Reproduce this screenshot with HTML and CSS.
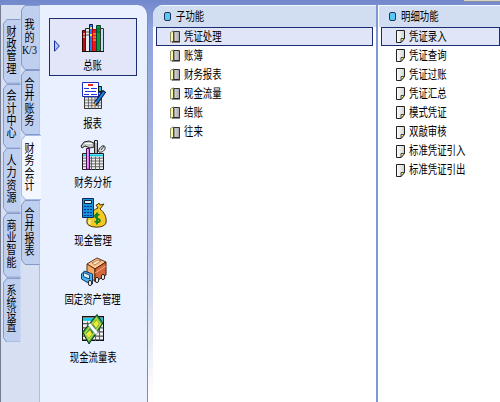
FILE: index.html
```html
<!DOCTYPE html>
<html lang="zh-CN">
<head>
<meta charset="utf-8">
<title>财务会计</title>
<link rel="stylesheet" href="styles.css">
</head>
<body>
<svg class="defs" width="0" height="0" aria-hidden="true">
  <defs>
    <linearGradient id="page" x1="0" x2="1"><stop offset="0" stop-color="#f4f4f4"/><stop offset="1" stop-color="#a2a2a6"/></linearGradient>
    <linearGradient id="sheet" x1="0" x2="1"><stop offset="0" stop-color="#fff"/><stop offset="1" stop-color="#d2d2cc"/></linearGradient>
    <symbol id="book" viewBox="0 0 11 13">
      <path d="M2 1.500h7.500v10H3.500" fill="url(#page)" stroke="#333"/>
      <path d="M.5 2.500L3.500.8v11H.5z" fill="#fbf8a8" stroke="#77744a" stroke-width=".8"/>
      <path d="M3.900 2v9.500M2 12h8" stroke="#222" fill="none"/>
    </symbol>
    <symbol id="note" viewBox="0 0 10 13">
      <path d="M.5.500h8v8L5 12.500H.5z" fill="url(#sheet)" stroke="#222"/>
      <path d="M8.500 8.500H5v4z" fill="#fff27a" stroke="#222" stroke-width=".8"/>
    </symbol>
    <symbol id="grid" viewBox="0 0 22 18" preserveAspectRatio="none">
      <path d="M.5.500h21v17H.5z" fill="#eee" stroke="#111"/>
      <path d="M1 2.500h20" stroke="#10c8e8" stroke-width="2"/>
      <path d="M1 5.500h20M1 8.500h20M1 11.500h20M1 14.500h20M5.500 4v14M9.500 4v14M13.500 4v14M17.500 4v14" stroke="#555" stroke-width=".9"/>
    </symbol>
  </defs>
</svg>
<div class="app">
  <aside class="tabs">
    <nav class="strip outer">
      <div class="tab"><svg viewBox="0 0 19 65" preserveAspectRatio="none"><path d="M18.500.5H4L.5 5v55L4 64.500h14.500"/></svg><span>财政管理</span></div>
      <div class="tab"><svg viewBox="0 0 19 65" preserveAspectRatio="none"><path d="M18.500.5H4L.5 5v55L4 64.500h14.500"/></svg><span>会计中心</span></div>
      <div class="tab"><svg viewBox="0 0 19 65" preserveAspectRatio="none"><path d="M18.500.5H4L.5 5v55L4 64.500h14.500"/></svg><span>人力资源</span></div>
      <div class="tab"><svg viewBox="0 0 19 65" preserveAspectRatio="none"><path d="M18.500.5H4L.5 5v55L4 64.500h14.500"/></svg><span>商业智能</span></div>
      <div class="tab"><svg viewBox="0 0 19 65" preserveAspectRatio="none"><path d="M18.500.5H4L.5 5v55L4 64.500h14.500"/></svg><span>系统设置</span></div>
    </nav>
    <nav class="strip inner">
      <div class="tab"><svg viewBox="0 0 19 65" preserveAspectRatio="none"><path d="M18.500.5H4L.5 5v55L4 64.500h14.500"/></svg><span>我的<b>K/3</b></span></div>
      <div class="tab"><svg viewBox="0 0 19 65" preserveAspectRatio="none"><path d="M18.500.5H4L.5 5v55L4 64.500h14.500"/></svg><span>合并账务</span></div>
      <div class="tab active"><svg viewBox="0 0 19 65" preserveAspectRatio="none"><path d="M19 .5H4L.5 5v55L4 64.500h15"/></svg><span>财务会计</span></div>
      <div class="tab"><svg viewBox="0 0 19 65" preserveAspectRatio="none"><path d="M18.500.5H4L.5 5v55L4 64.500h14.500"/></svg><span>合并报表</span></div>
    </nav>
  </aside>

  <nav class="modules">
    <a class="module selected">
      <svg class="arrow" width="6" height="12" viewBox="0 0 6 12"><path d="M.5.700v10.600L5.300 6z" fill="#a9c9ff" stroke="#1b2f9c"/></svg>
      <svg width="30" height="32" viewBox="0 0 30 32">
        <path d="M4.500 8.500h3v21h-3z" fill="#b4141c" stroke="#300"/><path d="M5 12h2M5 15h2" stroke="#fff"/>
        <path d="M7.500 6.500h4v23h-4z" fill="#e8eeee" stroke="#222"/><path d="M8 10h3M8 13h3" stroke="#555"/>
        <path d="M11.500 2.500h3v27h-3z" fill="#2878ec" stroke="#111a55"/><path d="M12 6h2M12 13h2" stroke="#e8e060" stroke-width="2"/>
        <path d="M14.500 7.500h4v22h-4z" fill="#f0141c" stroke="#c00"/><path d="M15 12h3M15 15h3M15 18h3" stroke="#ffd83c"/>
        <path d="M18.500 3.500h4v26h-4z" fill="#0c9a2c" stroke="#043"/><path d="M19 7h3M19 10h3" stroke="#053"/>
        <path d="M22.500 6.500h3v23h-3z" fill="#b7e5ed" stroke="#333"/><path d="M4 29.500h22" stroke="#111"/>
      </svg>
      <span>总账</span>
    </a>
    <a class="module">
      <svg width="30" height="32" viewBox="0 0 30 32">
        <use href="#grid" x="6" y="12" width="18" height="17"/>
        <path d="M4.500 2.500h16v14h-16z" fill="#fff" stroke="#1c2cc4"/>
        <path d="M10 5h5" stroke="#e22" stroke-width="2"/>
        <path d="M6 8.500h5M13 8.500h6M7 11.500h11M6 14.500h5M13 14.500h6" stroke="#2234e0"/>
        <path d="M20.500 6.500h3v5h-3z" fill="#20c8d8" stroke="#111"/>
        <path d="M26.500 11L17 24.500" stroke="#07143c" stroke-width="4"/><path d="M26 12l-8 11" stroke="#1688e8" stroke-width="2"/><path d="M18 22l-2 4" stroke="#dba83c" stroke-width="1.500"/>
      </svg>
      <span>报表</span>
    </a>
    <a class="module">
      <svg width="30" height="32" viewBox="0 0 30 32">
        <use href="#grid" x="4" y="14" width="22" height="17"/>
        <path d="M16.500 1.500h3v13h-3z" fill="#ddd" stroke="#222"/><path d="M18 4v10" stroke="#888"/>
        <path d="M20 13c2-6 6-8 7-5s-3 6-6 5M23 11l3-4" fill="#ddd" stroke="#333"/>
        <path d="M3 7l3-4 5-1 5 2v4l-4 1-5-2-3 2z" fill="#c9c9c9" stroke="#222"/><path d="M7 4.500h7" stroke="#fff"/>
        <path d="M8.500 9.500h3v21h-3z" fill="#d25ce8" stroke="#43104e"/><path d="M9.800 10v19" stroke="#f2b9ff"/>
      </svg>
      <span>财务分析</span>
    </a>
    <a class="module">
      <svg width="30" height="32" viewBox="0 0 30 32">
        <path d="M18 8l2 3c-7 3-12 9-11 15 1 5 17 6 19 0 1-6-2-11-6-14l4-5-4 1-1-2-2 2z" fill="#f5c823" stroke="#4b3705"/>
        <path d="M12 23c-1 2-1 3 0 4" stroke="#fff3a2" stroke-width="2" fill="none"/>
        <path d="M21.500 18c-5-2-6 2-2 3.500s3 5-3 3M19 15.500v12" stroke="#098125" stroke-width="1.800" fill="none"/>
        <path d="M4.500 1.500h11v19h-11z" fill="#1593dc" stroke="#07285c"/><path d="M6.500 3.500h7v3h-7z" fill="#d9f2fa" stroke="#123"/>
        <path d="M6 9.500h2M9 9.500h2M12 9.500h2M6 12.500h2M9 12.500h2M12 12.500h2M6 15.500h2M9 15.500h2M12 15.500h2M6 18.500h2M9 18.500h2M12 18.500h2" stroke="#092c87"/>
      </svg>
      <span>现金管理</span>
    </a>
    <a class="module">
      <svg width="30" height="32" viewBox="0 0 30 32">
        <path d="M9 8l10-6 9 4-11 7z" fill="#ffc792" stroke="#63300f"/><path d="M9 8l8 5v12l-8-5z" fill="#f7a968" stroke="#63300f"/><path d="M17 13l11-7v13l-11 7z" fill="#d4683a" stroke="#4e210d"/>
        <path d="M14 7l6-3 3 1-6 4z" fill="#ffe4c1" stroke="#9a5932" stroke-width=".7"/><path d="M17 17l11-7" stroke="#f0ae78"/>
        <path d="M3.500 18l3-3 8 3v10l-6-2-5-3z" fill="#4db2f0" stroke="#12355f"/><path d="M5.500 16.500l6 2.500v4l-6-2.500z" fill="#d7f3ff" stroke="#194370"/>
        <ellipse cx="12" cy="27" rx="1.700" ry="2.700" fill="#eee" stroke="#222"/><ellipse cx="19" cy="24" rx="1.700" ry="2.700" fill="#eee" stroke="#222"/><ellipse cx="25" cy="21" rx="1.700" ry="2.700" fill="#eee" stroke="#222"/>
      </svg>
      <span>固定资产管理</span>
    </a>
    <a class="module">
      <svg width="30" height="32" viewBox="0 0 30 32">
        <use href="#grid" x="4" y="2" width="22" height="25"/>
        <path d="M4.500 18L19 .5l6 8.500L11 30z" fill="#369443" stroke="#073f20"/>
        <path d="M7 19L18.500 4l4 6L11 26z" fill="none" stroke="#b9dc3c" stroke-width="1.500"/>
        <path d="M8 20l4-4 2 4-3 4zM15 10l4-4 2 4-3 4z" fill="#f3e83a"/>
        <path d="M10 11l8 10 2-3-8-9z" fill="#fff" stroke="#888" stroke-width=".5"/>
      </svg>
      <span>现金流量表</span>
    </a>
  </nav>

  <section class="panel sub">
    <h2><i></i><span>子功能</span></h2>
    <ul>
      <li class="selected"><svg><use href="#book"/></svg><span>凭证处理</span></li>
      <li><svg><use href="#book"/></svg><span>账簿</span></li>
      <li><svg><use href="#book"/></svg><span>财务报表</span></li>
      <li><svg><use href="#book"/></svg><span>现金流量</span></li>
      <li><svg><use href="#book"/></svg><span>结账</span></li>
      <li><svg><use href="#book"/></svg><span>往来</span></li>
    </ul>
  </section>

  <section class="panel detail">
    <h2><i></i><span>明细功能</span></h2>
    <ul>
      <li class="selected"><svg><use href="#note"/></svg><span>凭证录入</span></li>
      <li><svg><use href="#note"/></svg><span>凭证查询</span></li>
      <li><svg><use href="#note"/></svg><span>凭证过账</span></li>
      <li><svg><use href="#note"/></svg><span>凭证汇总</span></li>
      <li><svg><use href="#note"/></svg><span>模式凭证</span></li>
      <li><svg><use href="#note"/></svg><span>双敲审核</span></li>
      <li><svg><use href="#note"/></svg><span>标准凭证引入</span></li>
      <li><svg><use href="#note"/></svg><span>标准凭证引出</span></li>
    </ul>
  </section>
  <div class="corner"></div>
</div>
</body>
</html>
```

FILE: styles.css
```css
* { box-sizing: border-box; }
body {
  margin: 0;
  overflow: hidden;
  font: 12px/14px "Liberation Sans", "Noto Sans CJK SC", sans-serif;
  color: #000;
}
.defs { position: absolute; }
.app {
  position: relative;
  display: grid;
  grid-template-columns: 40px 108px 228px 124px;
  width: 500px;
  height: 402px;
  padding-top: 5px;
  background: linear-gradient(#7388cc, #8fa3dc 30px, #a5b4e0 140px, #c3cbea 250px, #fcfcfe 390px);
}
/* edge of the window toolbar above the panels */
.corner {
  position: absolute;
  top: 0;
  right: 0;
  width: 36px;
  height: 2px;
  background: #d8d4cc;
  border-bottom: 1px solid #8f8f9c;
}

/* vertical tabs */
.tabs {
  display: flex;
  background: #d7e0f3;
  border-left: 1px solid #777d91;
  border-right: 1px solid #a9bbea;
}
.strip { display: flex; flex-direction: column; flex: none; }
.outer { width: 20px; padding: 14px 0 0 2px; }
.inner { width: 19px; }
.tab {
  position: relative;
  height: 64.700px;
  display: flex;
  justify-content: center;
  align-items: center;
}
.inner .tab { height: 65px; padding-right: 3px; }
.outer .tab { padding-right: 1px; }
.tab svg { position: absolute; inset: 0; width: 100%; height: 100%; }
.tab path { fill: #bfcff0; stroke: #8499c8; }
.tab.active svg { width: 20px; }
.tab.active path { fill: #f3f7ff; stroke: #a9bbea; }
.tab span {
  position: relative;
  width: 13px;
  font-size: 12.500px;
  line-height: 12.300px;
  text-align: center;
  overflow-wrap: anywhere;
  transform: scaleX(.8);
}
.outer .tab span { top: -1px; }
.tab b {
  display: block;
  font: 12.500px/12px "Liberation Serif", serif;
  white-space: nowrap;
  margin-left: -3px;
}

/* module icons */
.modules {
  height: 397px;
  padding: 13px 0 0 9px;
  background: #e9f0ff;
  border-right: 1px solid #8088bd;
  border-radius: 0 10px 0 0;
}
.module {
  position: relative;
  display: flex;
  flex-direction: column;
  align-items: center;
  width: 88px;
  height: 58.400px;
  padding-top: 4px;
}
.module.selected { box-shadow: inset 0 0 0 1px #1c2c70; background: #e2e6f8; }
.module .arrow { position: absolute; left: 5px; top: 22px; }
.module span {
  margin-top: 5px;
  font-size: 12.500px;
  white-space: nowrap;
  transform: scaleX(.75);
}

/* lists */
.panel { background: #fff; overflow: hidden; }
.sub { margin-left: 5px; border-radius: 10px 0 0; }
.detail { border-left: 2px solid #7d97d9; padding-left: 1px; }
.panel h2 {
  display: flex;
  align-items: center;
  height: 22px;
  margin: 0;
  padding-left: 11px;
  gap: 5px;
  border-top: 1px solid #f2f6ff;
  background: #d1def2;
  font: inherit;
}
.detail h2 { padding-left: 10px; }
.panel h2 i {
  width: 7px;
  height: 9px;
  border: 1px solid #235;
  border-radius: 2px;
  background: #58c8f8;
}
.panel span {
  font-size: 12.500px;
  white-space: nowrap;
  transform: scaleX(.75);
  transform-origin: left;
}
.panel ul { list-style: none; margin: 0 3px; padding: 0; }
.detail ul { margin: 0 0 0 2px; }
.panel li {
  display: flex;
  align-items: center;
  height: 19.100px;
  padding-left: 14px;
  gap: 3px;
}
.detail li { padding-left: 15px; }
.panel li.selected { box-shadow: inset 0 0 0 1px #1c2c70; background: #e1e5f8; }
.panel li svg { width: 11px; height: 13px; flex: none; }
.detail li svg { width: 10px; }
```
